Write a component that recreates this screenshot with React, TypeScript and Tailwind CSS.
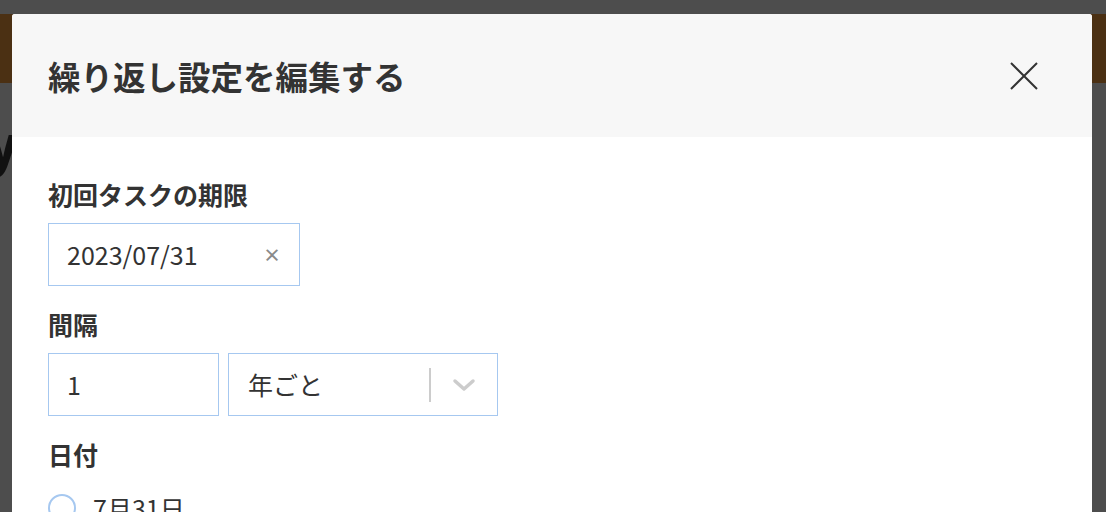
const font = { fontFamily: '"Noto Sans CJK JP", "Noto Sans", sans-serif' };

function Label({ children }: { children: React.ReactNode }) {
  return <div className="mb-[11px] text-[25px] font-bold leading-[36px] text-[#333]">{children}</div>;
}

export default function App() {
  return (
    <div className="relative h-[512px] w-[1106px] overflow-hidden bg-[#4d4d4d]" style={font}>
      {/* page behind the overlay */}
      <div className="mt-[14px] h-[69px] bg-[#4b3013]" />
      <div className="-ml-[14px] pt-[30px] text-[54px] font-black leading-[60px] text-[#111]">y</div>

      {/* modal */}
      <div className="absolute left-[12px] top-[14px] w-[1080px] overflow-hidden rounded-t-[3px] bg-white">
        <div className="flex h-[123px] items-center justify-between bg-[#f7f7f7] pl-[36px] pr-[54px]">
          <h2 className="text-[32.5px] font-bold leading-[44px] text-[#333]">繰り返し設定を編集する</h2>
          <svg className="h-[28px] w-[28px]" viewBox="0 0 28 28" fill="none">
            <path d="M1 1l26 26M27 1L1 27" stroke="#333" strokeWidth="2" />
          </svg>
        </div>

        <div className="px-[36px] pb-[40px] pt-[39px]">
          <Label>初回タスクの期限</Label>
          <div className="flex h-[63px] w-[252px] items-center justify-between border border-[#a6c8f0] pl-[18px] pr-[18px] text-[25px] text-[#333]">
            <span>2023/07/31</span>
            <span className="text-[18px] font-bold text-[#8a8a8a]">×</span>
          </div>

          <div className="mt-[20px]">
            <Label>間隔</Label>
            <div className="flex gap-[9px]">
              <div className="flex h-[63px] w-[171px] items-center border border-[#a6c8f0] pl-[18px] text-[25px] text-[#333]">1</div>
              <div className="flex h-[63px] w-[270px] items-center border border-[#a6c8f0] pl-[19px] text-[25px] text-[#333]">
                <span className="flex-1">年ごと</span>
                <span className="h-[34px] w-[2px] bg-[#ccc]" />
                <svg className="mx-[21px] h-[14px] w-[24px]" viewBox="0 0 24 14" fill="none">
                  <path d="M3 3l9 8 9-8" stroke="#ccc" strokeWidth="3.5" strokeLinecap="round" strokeLinejoin="round" />
                </svg>
              </div>
            </div>
          </div>

          <div className="mt-[20px]">
            <Label>日付</Label>
            <div className="flex items-center gap-[17px] pt-[7px]">
              <span className="h-[28px] w-[28px] rounded-full border-2 border-[#a6c8f0] bg-white" />
              <span className="text-[25px] leading-[36px] text-[#333]">7月31日</span>
            </div>
          </div>
        </div>
      </div>
    </div>
  );
}
